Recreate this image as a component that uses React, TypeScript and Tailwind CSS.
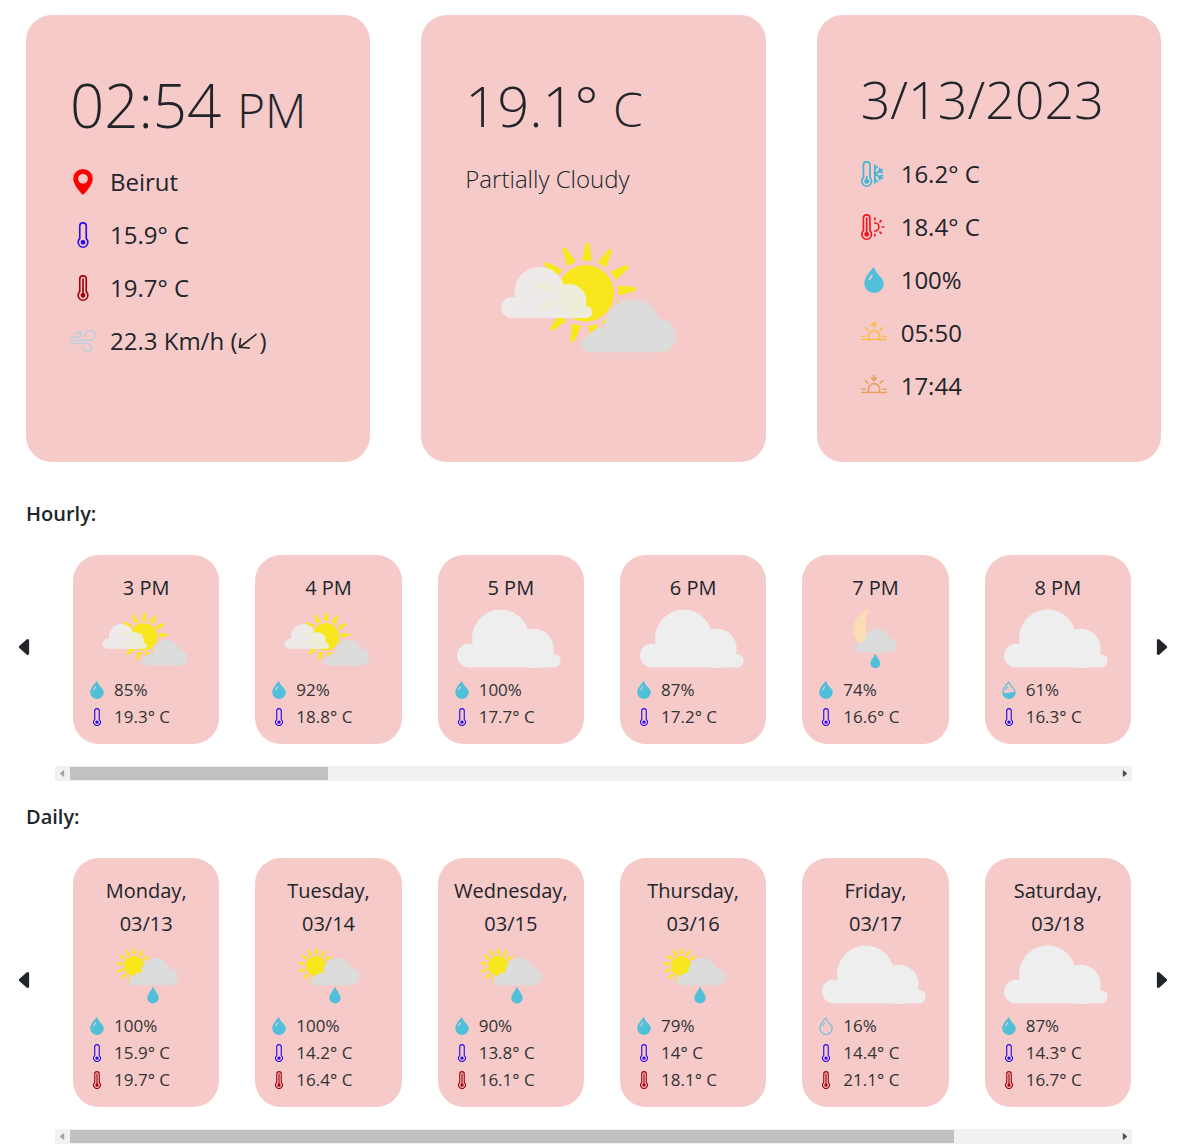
import type { ReactNode } from "react";
import {
  BsCaretLeftFill,
  BsCaretRightFill,
  BsDroplet,
  BsDropletFill,
  BsDropletHalf,
  BsGeoAltFill,
  BsSunrise,
  BsSunset,
  BsThermometer,
  BsThermometerHigh,
  BsThermometerSnow,
  BsThermometerSun,
  BsWind,
} from "react-icons/bs";

type Weather = "partly" | "cloudy" | "sunRain" | "moonRain";

const RAYS = Array.from({ length: 13 }, (_, i) => 2 + (i * 360) / 13);

function Sun() {
  return (
    <g fill="#f8e71c">
      <circle r="85" />
      {RAYS.map((angle) => (
        <path key={angle} d="M-15-98 L-6-148 Q0-156 6-148 L15-98Z" transform={`rotate(${angle})`} />
      ))}
    </g>
  );
}

function WhiteCloud() {
  return (
    <g fill="#eeeeee">
      <circle cx="115" cy="315" r="36" />
      <circle cx="210" cy="263" r="86" />
      <circle cx="310" cy="294" r="59" />
      <circle cx="370" cy="331" r="20" />
      <path d="M115 300H368V351H115Z" />
    </g>
  );
}

function GreyCloud() {
  return (
    <path
      fill="#dcdcdc"
      d="M395 846 C376 846 365 835 365 821 C365 807 377 797 390 795 C396 779 414 770 436 773 C436 722 469 687 520 687 C560 687 586 714 598 747 C630 750 648 770 648 797 C648 826 626 846 597 846Z"
    />
  );
}

function Drop() {
  return <path fill="#50bfd9" d="M0-33 C5-20 17-9 17 1 A17 17 0 0 1-17 1 C-17-9-5-20 0-33Z" />;
}

function WindArrow() {
  return (
    <svg
      role="img"
      aria-label="South-west"
      className="inline h-[18px] w-[22px] align-baseline"
      viewBox="0 0 22 18"
      fill="none"
      stroke="currentColor"
      strokeWidth="1.6"
    >
      <path d="M19.5 2 L3 15 M3.5 6 L2.5 15.3 L13 16" />
    </svg>
  );
}

function WeatherIcon({ kind, large }: { kind: Weather; large?: boolean }) {
  if (kind === "cloudy")
    return (
      <svg role="img" aria-label="Cloudy" className="mr-[3px] h-[59px] w-[104px]" viewBox="79 176 312 176">
        <WhiteCloud />
      </svg>
    );
  if (kind === "sunRain")
    return (
      <svg role="img" aria-label="Sun and rain" className="ml-px h-[59px] w-[64px]" viewBox="315 288 192 176">
        <g transform="translate(372 350) scale(.36)"><Sun /></g>
        <g transform="translate(169 -28) scale(.516)"><GreyCloud /></g>
        <g transform="translate(429 445)"><Drop /></g>
      </svg>
    );
  if (kind === "moonRain")
    return (
      <svg role="img" aria-label="Night rain" className="h-[59px] w-[44px]" viewBox="160 177 132 177">
        <path fill="#fbdcb4" d="M210 178 C174 185 153 225 163 254 Q169 274 184 284 L203 268 C197 235 194 205 210 178Z" />
        <g transform="translate(-1 -73) scale(.45)"><GreyCloud /></g>
        <g transform="translate(227 339) scale(.86)"><Drop /></g>
      </svg>
    );
  return (
    <svg
      role="img"
      aria-label="Partially cloudy"
      className={large ? "h-[112px] w-[177px]" : "mr-[3px] h-[59px] w-[86px]"}
      viewBox="120 512 531 336"
    >
      <g transform="translate(377 669)"><Sun /></g>
      <g opacity=".9" transform="translate(54 434) scale(.88)"><WhiteCloud /></g>
      <GreyCloud />
    </svg>
  );
}

function Row({ icon, children }: { icon: ReactNode; children: ReactNode }) {
  return (
    <li className="flex h-[53px] items-center gap-[14px] text-2xl">
      <span className="flex w-[26px] justify-center text-[26px]">{icon}</span>
      <span>{children}</span>
    </li>
  );
}

function Panel({ children }: { children: ReactNode }) {
  return <article className="min-h-[447px] rounded-[26px] bg-[#f5cac9] px-11">{children}</article>;
}

function Detail({ icon, children }: { icon: ReactNode; children: ReactNode }) {
  return (
    <li className="flex items-center gap-2 text-[17px] leading-[27px]">
      <span className="w-[18px] text-lg">{icon}</span>
      <span>{children}</span>
    </li>
  );
}

type Item = { title: string; date?: string; kind: Weather; wet: number; low: string; high?: string };

const HOURLY: Item[] = [
  { title: "3 PM", kind: "partly", wet: 85, low: "19.3" },
  { title: "4 PM", kind: "partly", wet: 92, low: "18.8" },
  { title: "5 PM", kind: "cloudy", wet: 100, low: "17.7" },
  { title: "6 PM", kind: "cloudy", wet: 87, low: "17.2" },
  { title: "7 PM", kind: "moonRain", wet: 74, low: "16.6" },
  { title: "8 PM", kind: "cloudy", wet: 61, low: "16.3" },
];

const DAILY: Item[] = [
  { title: "Monday,", date: "03/13", kind: "sunRain", wet: 100, low: "15.9", high: "19.7" },
  { title: "Tuesday,", date: "03/14", kind: "sunRain", wet: 100, low: "14.2", high: "16.4" },
  { title: "Wednesday,", date: "03/15", kind: "sunRain", wet: 90, low: "13.8", high: "16.1" },
  { title: "Thursday,", date: "03/16", kind: "sunRain", wet: 79, low: "14", high: "18.1" },
  { title: "Friday,", date: "03/17", kind: "cloudy", wet: 16, low: "14.4", high: "21.1" },
  { title: "Saturday,", date: "03/18", kind: "cloudy", wet: 87, low: "14.3", high: "16.7" },
];

function Humidity({ value }: { value: number }) {
  if (value > 66) return <BsDropletFill className="text-[#50bfd9]" />;
  if (value > 33) return <BsDropletHalf className="text-[#50bfd9]" />;
  return <BsDroplet className="text-[#6fbbd8]" />;
}

function ForecastCard({ item }: { item: Item }) {
  return (
    <article className="rounded-[26px] bg-[#f5cac9] px-[15px] pt-4 pb-[14px]">
      <h3 className="-mx-3 text-center text-xl leading-[33px]">
        {item.title}
        {item.date && <span className="block">{item.date}</span>}
      </h3>
      <div className="flex justify-center pt-[5px] pb-2">
        <WeatherIcon kind={item.kind} />
      </div>
      <ul className="flex flex-col text-[#333]">
        <Detail icon={<Humidity value={item.wet} />}>{item.wet}%</Detail>
        <Detail icon={<BsThermometer className="text-[#2a0cf0]" />}>{item.low}° C</Detail>
        {item.high && <Detail icon={<BsThermometerHigh className="text-[#a00008]" />}>{item.high}° C</Detail>}
      </ul>
    </article>
  );
}

function Forecast({ title, items, thumb }: { title: string; items: Item[]; thumb: string }) {
  return (
    <section>
      <h2 className="px-[26px] text-xl leading-[30px] font-semibold">{title}</h2>
      <div className="mt-[26px] flex">
        <button type="button" aria-label={`${title} previous`} className="flex w-[55px] shrink-0 items-center pb-1.5 pl-[14px]">
          <BsCaretLeftFill className="size-[22px]" />
        </button>
        <div className="grid grow grid-cols-6 gap-9 pr-px pl-[18px]">
          {items.map((item) => (
            <ForecastCard key={item.title} item={item} />
          ))}
        </div>
        <button type="button" aria-label={`${title} next`} className="flex w-[55px] shrink-0 items-center pb-1.5 pl-[18px]">
          <BsCaretRightFill className="size-[22px]" />
        </button>
      </div>
      <div className="mx-[55px] mt-[22px] flex h-[15px] items-center bg-[#f1f1f1]">
        <button type="button" aria-label={`Scroll ${title} left`} className="flex w-[15px] justify-center">
          <BsCaretLeftFill className="size-[9px] text-[#a3a3a3]" />
        </button>
        <div className="grow">
          <div className={`h-[13px] bg-[#c1c1c1] ${thumb}`} />
        </div>
        <button type="button" aria-label={`Scroll ${title} right`} className="flex w-[15px] justify-center">
          <BsCaretRightFill className="size-[9px] text-[#505050]" />
        </button>
      </div>
    </section>
  );
}

export default function App() {
  return (
    <main className="overflow-hidden bg-white pt-[15px] font-['Open_Sans','Noto_Sans',sans-serif] text-[#212529]">
      <section className="grid grid-cols-3 gap-[51px] px-[26px]">
        <Panel>
          <h1 className="pt-[45px] text-[60px] leading-[90px] font-light whitespace-nowrap">
            02:54 <span className="text-5xl">PM</span>
          </h1>
          <ul className="pt-[5px]">
            <Row icon={<BsGeoAltFill className="text-[#ff0000]" />}>Beirut</Row>
            <Row icon={<BsThermometer className="text-[#2a0cf0]" />}>15.9° C</Row>
            <Row icon={<BsThermometerHigh className="text-[#a00008]" />}>19.7° C</Row>
            <Row icon={<BsWind className="text-[#b8d0df]" />}>
              22.3 Km/h (<WindArrow />)
            </Row>
          </ul>
        </Panel>
        <Panel>
          <h2 className="pt-[45px] text-[56px] leading-[90px] font-light whitespace-nowrap">
            19.1° <span className="text-5xl">C</span>
          </h2>
          <p className="pt-[11px] text-2xl leading-9 font-light">Partially Cloudy</p>
          <div className="flex justify-center pt-11 pr-[10px]">
            <WeatherIcon kind="partly" large />
          </div>
        </Panel>
        <Panel>
          <h2 className="pt-[42px] text-[52px] leading-[84px] font-light whitespace-nowrap">3/13/2023</h2>
          <ul className="pt-[6px]">
            <Row icon={<BsThermometerSnow className="text-[#3bb5d4]" />}>16.2° C</Row>
            <Row icon={<BsThermometerSun className="text-[#f5141c]" />}>18.4° C</Row>
            <Row icon={<BsDropletFill className="text-[#50bfd9]" />}>100%</Row>
            <Row icon={<BsSunrise className="text-[#fdb94a]" />}>05:50</Row>
            <Row icon={<BsSunset className="text-[#e8a05c]" />}>17:44</Row>
          </ul>
        </Panel>
      </section>
      <div className="flex flex-col gap-[21px] pt-[37px]">
        <Forecast title="Hourly:" items={HOURLY} thumb="w-[24.6%]" />
        <Forecast title="Daily:" items={DAILY} thumb="w-[84.4%]" />
      </div>
    </main>
  );
}
